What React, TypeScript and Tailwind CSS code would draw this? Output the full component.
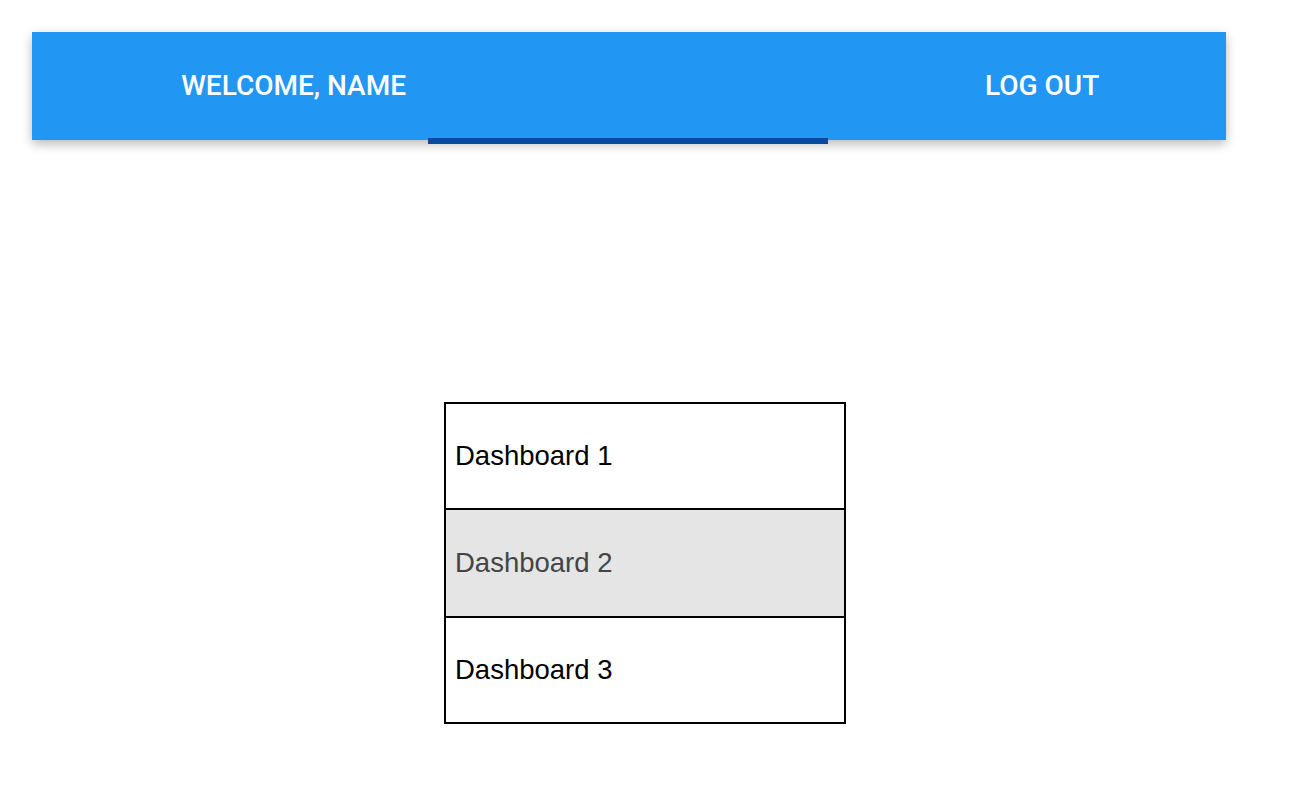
import { useState } from 'react';

const DASHBOARDS = ['Dashboard 1', 'Dashboard 2', 'Dashboard 3'];
const ROW_HEIGHTS = ['h-[104px]', 'h-[108px]', 'h-[106px]'];

export default function App() {
  const [hovered] = useState<number>(1);

  return (
    <div className="min-h-screen bg-white pt-8 pl-8">
      <header className="relative w-[1194px] h-[108px] bg-[#2196f3] shadow-[0_4px_10px_rgba(0,0,0,0.28)] font-['Roboto',sans-serif] text-white text-[28px] font-medium">
        <nav className="grid grid-cols-[396px_400px_1fr] h-full">
          <button className="flex items-center justify-end pr-[22px]">WELCOME, NAME</button>
          <button className="flex items-center justify-center" aria-label="tab" />
          <button className="flex items-center justify-start pl-[157px]">LOG OUT</button>
        </nav>
        <span className="absolute left-[396px] -bottom-1 w-[400px] h-[6px] bg-[#0d47a1]" />
      </header>

      <ul className="mt-[262px] ml-[412px] w-[402px] border-2 border-black font-['Liberation_Sans',Arial,sans-serif] text-[27.5px]">
        {DASHBOARDS.map((name, i) => (
          <li
            key={name}
            className={`flex items-center pl-[9px] ${ROW_HEIGHTS[i]} ${
              i > 0 ? 'border-t-2 border-black' : ''
            } ${hovered === i ? 'bg-[#e5e5e5] text-[#444444]' : 'text-black'}`}
          >
            {name}
          </li>
        ))}
      </ul>
    </div>
  );
}
